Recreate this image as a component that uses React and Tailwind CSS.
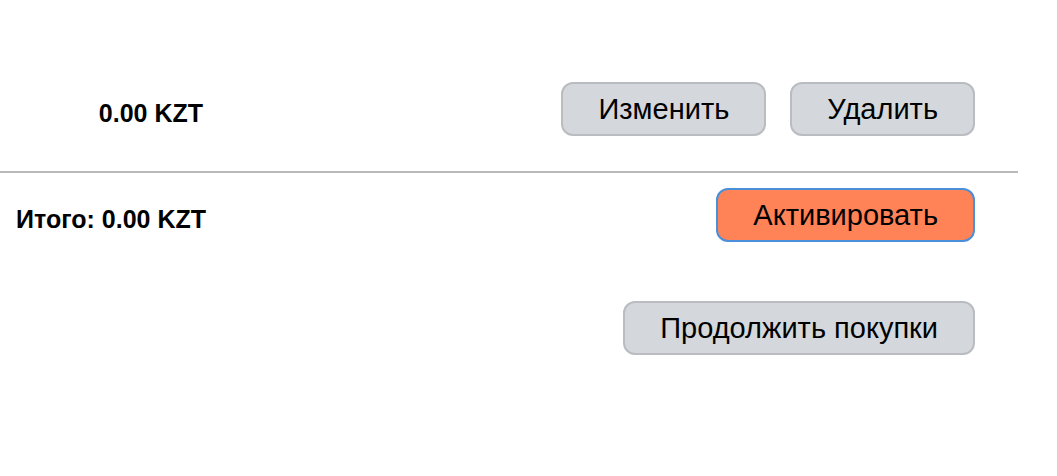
import React from 'react';

const GrayButton = ({ children }) => (
  <button className="h-[54px] px-[35px] rounded-[12px] border-2 border-[#b9bcc1] bg-[#d4d7dc] text-[29px] leading-none text-black">
    {children}
  </button>
);

const App = () => {
  return (
    <div className="min-h-screen bg-white font-['Liberation_Sans',Arial,sans-serif] text-black">
      <div className="w-[1018px] pt-[82px]">
        <div className="flex items-center h-[54px] pr-[43px]">
          <div className="w-[203px] text-right text-[25px] font-bold mt-[10px]">0.00 KZT</div>
          <div className="ml-auto flex gap-[24px]">
            <GrayButton>Изменить</GrayButton>
            <GrayButton>Удалить</GrayButton>
          </div>
        </div>

        <div className="mt-[35px] h-[2px] bg-[#b8b9bb]" />

        <div className="flex items-center h-[54px] mt-[15px] pr-[43px]">
          <div className="pl-[16px] text-[25px] font-bold mt-[10px]">Итого: 0.00 KZT</div>
          <button className="ml-auto h-[54px] px-[35px] rounded-[12px] border-2 border-[#4a8fd8] bg-[#ff8357] text-[29px] leading-none text-black">
            Активировать
          </button>
        </div>

        <div className="flex justify-end mt-[59px] pr-[43px]">
          <GrayButton>Продолжить покупки</GrayButton>
        </div>
      </div>
    </div>
  );
};

export default App;
